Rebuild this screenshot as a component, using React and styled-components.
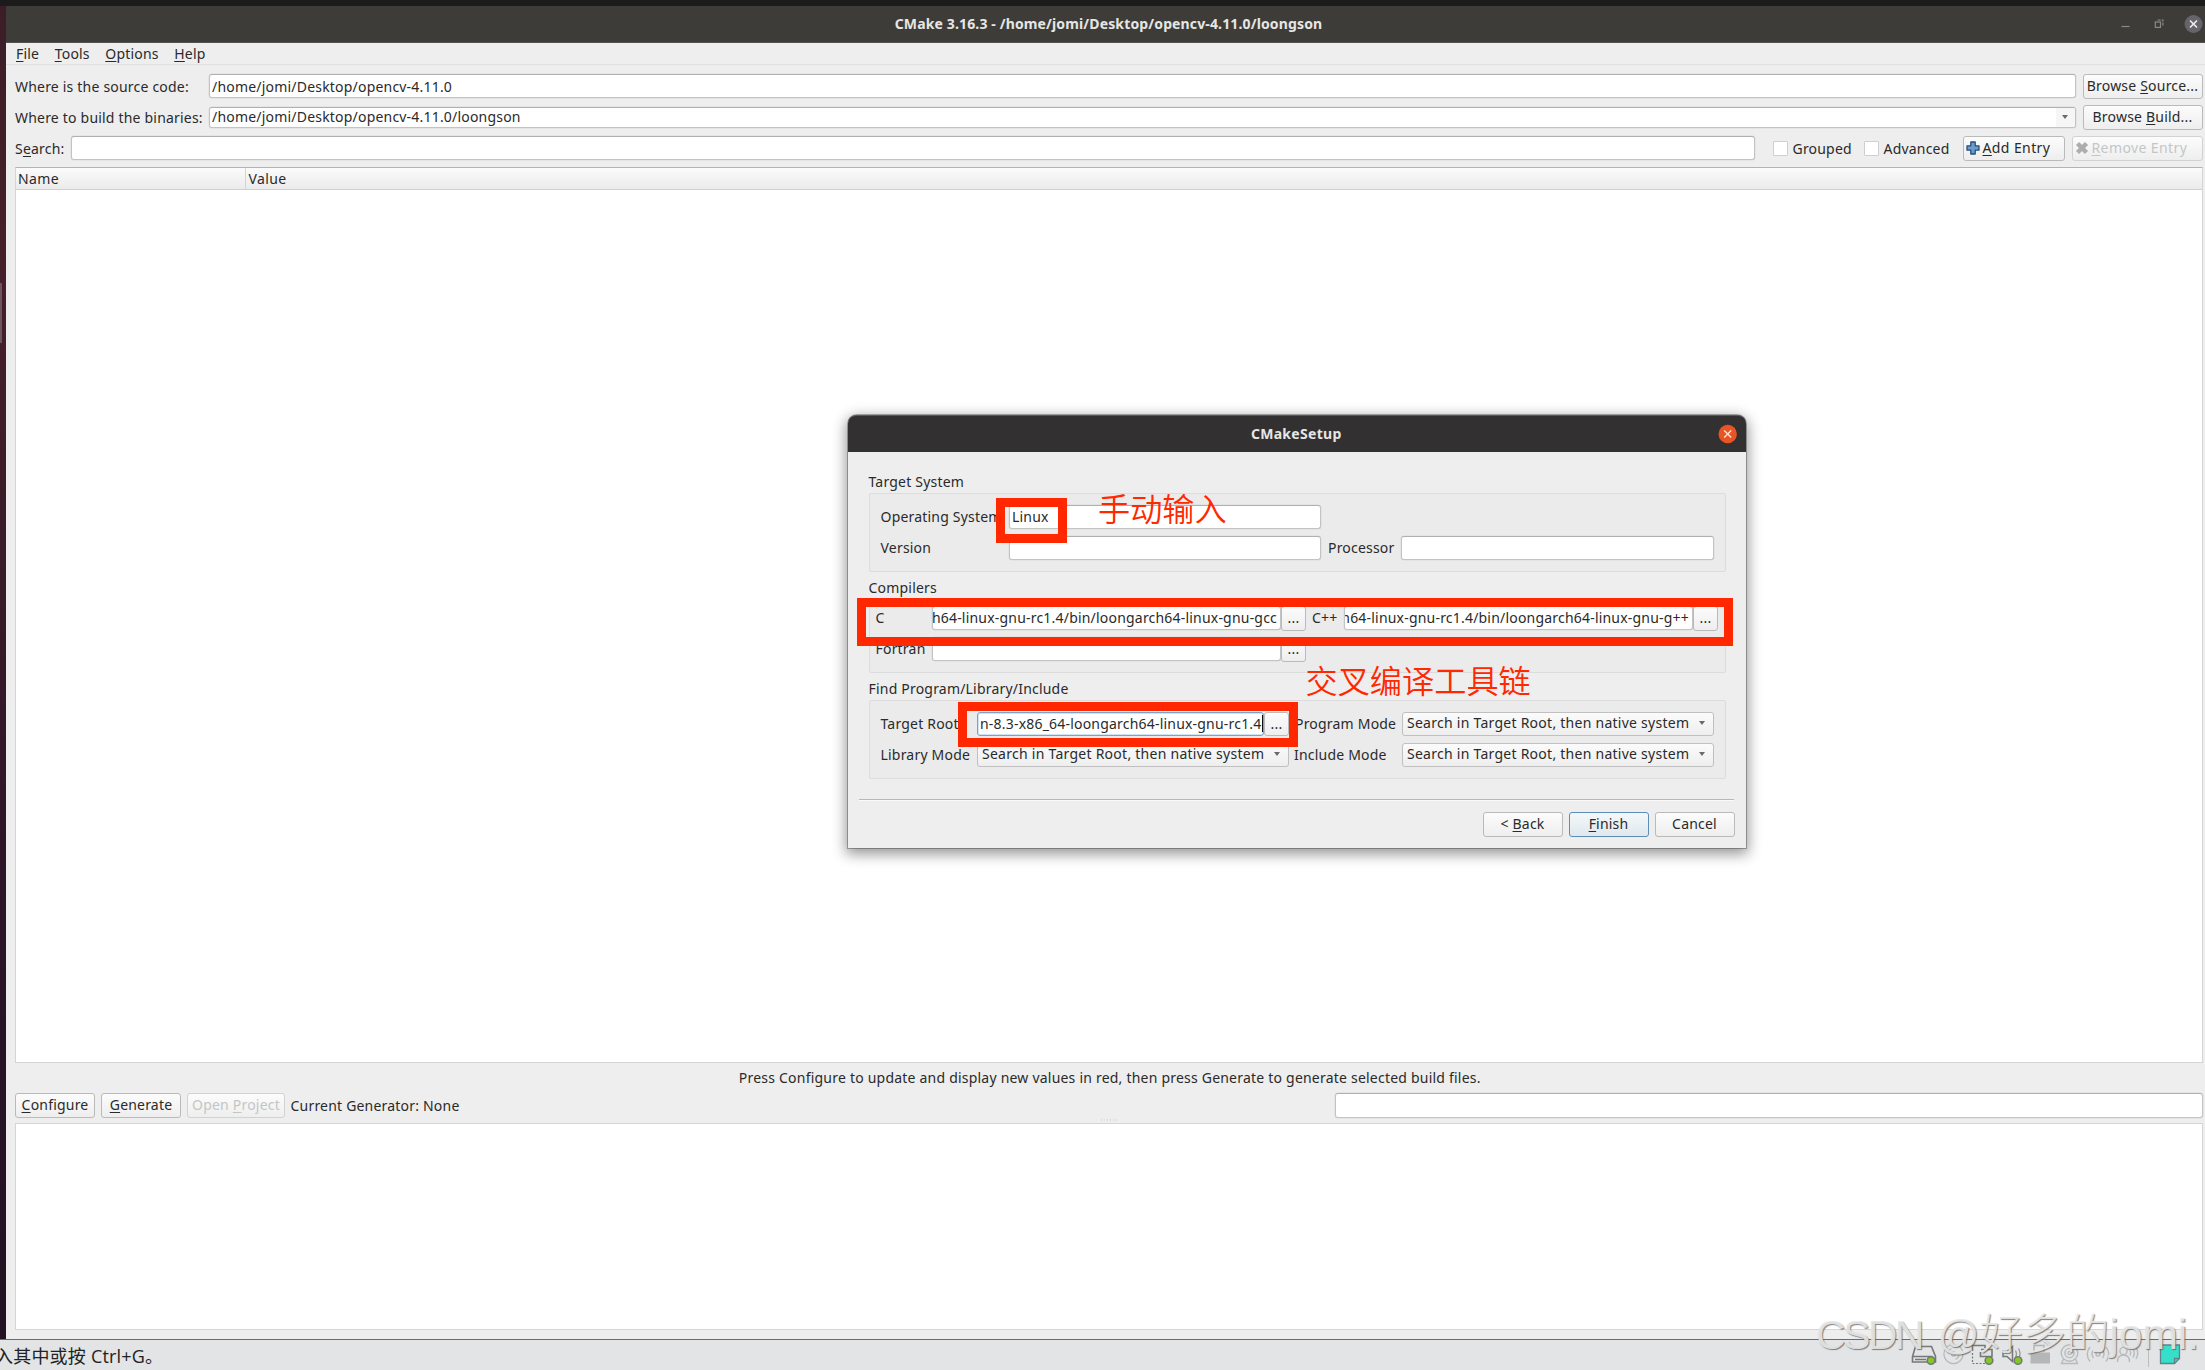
import React from 'react';
import styled, { createGlobalStyle, css } from 'styled-components';

const GlobalStyle = createGlobalStyle`
  * { box-sizing: border-box; }
  body {
    margin: 0;
    overflow: hidden;
    background: #eeeeee;
    color: #2a2a2a;
    font-family: "Noto Sans", "Noto Sans CJK SC", sans-serif;
    font-size: 14px;
    line-height: 20px;
    letter-spacing: 0.2px;
    white-space: nowrap;
  }
`;

const Screen = styled.div`
  position: relative;
  width: 2205px;
  height: 1370px;
  overflow: hidden;
  display: flex;
  flex-direction: column;
`;

const TopEdge = styled.div`
  height: 6px;
  background: #1b1b1b;
`;

const Desktop = styled.div`
  height: 1333px;
  display: flex;
`;

const Wallpaper = styled.div`
  width: 6px;
  padding-top: 277px;
  background: linear-gradient(#3c1d27 0, #45202a 20%, #381a28 45%, #2a1426 70%, #231221 100%);
`;

const DockMark = styled.div`
  width: 2px;
  height: 60px;
  background: #6b5560;
`;

const Window = styled.div`
  flex: 1;
  min-width: 0;
  display: flex;
  flex-direction: column;
  background: #eeeeee;
`;

const TitleBar = styled.header`
  height: 36.5px;
  display: grid;
  grid-template-columns: 1fr auto 1fr;
  align-items: center;
  padding: 1px 2px 0 0;
  background: #3e3c39;
  border-bottom: 1px solid #55524f;
`;

const WindowTitle = styled.h1`
  grid-column: 2;
  margin: 0 0 0 8px;
  color: #e6e6e4;
  font-size: 14px;
  font-weight: 700;
  line-height: 20px;
  letter-spacing: 0.14px;
`;

const WindowControls = styled.div`
  justify-self: end;
  display: flex;
`;

const MenuBar = styled.nav`
  height: 22.5px;
  display: flex;
  align-items: center;
  gap: 15.5px;
  padding: 1px 0 0 10px;
  border-bottom: 1px solid #e0e0e0;
`;

const MenuItem = styled.span`
  color: #2a2a2a;
`;

const Key = styled.span`
  text-decoration: underline;
  text-decoration-thickness: 1px;
  text-underline-offset: 2px;
`;

const Main = styled.main`
  display: flex;
  flex-direction: column;
  padding: 9px 2.5px 0 9px;
`;

const PathRow = styled.div`
  height: ${(p) => p.$height || 31}px;
  display: grid;
  grid-template-columns: 194px 1fr 120px;
  column-gap: 0;
  align-items: start;
`;

const FieldLabel = styled.label`
  line-height: 25px;
`;

const fieldFrame = css`
  border: 1px solid #c3c3c3;
  border-top-color: #b0b0b0;
  border-radius: 3px;
  background: #ffffff;
  box-shadow: 0 0 0 0.5px #dcdcdc;
`;

const Field = styled.div`
  ${fieldFrame}
  height: ${(p) => p.$height || 24}px;
  margin-right: ${(p) => p.$gap || 0}px;
  padding-left: 2px;
  display: flex;
  align-items: center;
  justify-content: ${(p) => (p.$end ? 'flex-end' : 'flex-start')};
  overflow: hidden;
  ${(p) => p.$end && css`padding-right: ${p.$focus ? 1 : 3}px;`}
  ${(p) => p.$focus && css`
    border-color: #7ba3c6;
    box-shadow: inset 0 0 0 1px #cfe3f2;
  `}
`;

const PathField = styled(Field)`
  padding-top: 1px;
`;

const EditableCombo = styled(Field)`
  height: 20.5px;
  margin-top: 2px;
  justify-content: space-between;
`;

const DropZone = styled.span`
  width: 19px;
  align-self: stretch;
  display: flex;
  align-items: center;
  justify-content: center;
  padding-right: 2px;
  background: #f6f6f6;
`;

const Caret = styled.i`
  border: 3.5px solid transparent;
  border-top: 4.5px solid #6a6a6a;
  border-bottom: 0;
`;

const Button = styled.button`
  width: ${(p) => (p.$width ? `${p.$width}px` : 'auto')};
  height: 24.5px;
  padding: 0;
  display: flex;
  align-items: center;
  justify-content: ${(p) => (p.$icon ? 'flex-start' : 'center')};
  gap: 3px;
  ${(p) => p.$icon && css`padding-left: 2px;`}
  border: 1px solid ${(p) => (p.disabled ? '#d2d2d2' : '#bababa')};
  border-radius: 3px;
  background: linear-gradient(#fcfcfc, #eeeeee);
  color: ${(p) => (p.disabled ? '#c3c6c6' : '#2a2a2a')};
  font: inherit;
  letter-spacing: inherit;
  white-space: pre;
  ${(p) => p.$primary && css`
    border-color: #5d8db5;
    background: linear-gradient(#f4f8fa, #dfe8ed);
  `}
`;

const AddButton = styled(Button)`
  letter-spacing: 0.4px;
`;

const SearchRow = styled.div`
  height: 31px;
  display: flex;
  align-items: flex-start;
`;

const SearchLabel = styled(FieldLabel)`
  width: 56px;
`;

const SearchField = styled(Field)`
  width: 1684px;
  margin-right: 18px;
`;

const Check = styled.label`
  width: ${(p) => p.$width}px;
  display: flex;
  align-items: center;
  gap: 5px;
  line-height: 25px;
`;

const CheckBox = styled.span`
  width: 14.5px;
  height: 14.5px;
  border: 1px solid #cfcfcf;
  border-radius: 1px;
  background: #ffffff;
`;

const Spacer = styled.span`
  flex: 1;
`;

const Table = styled.section`
  height: 896px;
  border: 1.5px solid #d5d5d5;
  border-top: 1px solid #b3b3b3;
  background: #ffffff;
`;

const TableHead = styled.div`
  height: 21.5px;
  display: grid;
  grid-template-columns: 229.5px 1fr;
  background: linear-gradient(#fbfbfb, #ebebeb);
  border-bottom: 1px solid #d0d0d0;
`;

const HeadCell = styled.div`
  padding-left: ${(p) => (p.$last ? 3 : 2)}px;
  line-height: 22px;
  letter-spacing: 0.4px;
  border-right: ${(p) => (p.$last ? 0 : '1px solid #d5d5d5')};
`;

const Hint = styled.p`
  height: 30px;
  margin: 0;
  padding-left: 2px;
  text-align: center;
  line-height: 29px;
  letter-spacing: 0.215px;
`;

const ActionRow = styled.div`
  height: 26px;
  display: flex;
  align-items: flex-start;
  gap: 6px;
`;

const GeneratorText = styled.span`
  line-height: 25px;
  margin-left: -0.5px;
`;

const Progress = styled(Field)`
  width: 868px;
  height: 25px;
`;

const Splitter = styled.div`
  height: 4px;
  display: flex;
  justify-content: center;
  gap: 2px;
`;

const Dot = styled.i`
  width: 1px;
  height: 2px;
  background: #dadada;
`;

const Output = styled.section`
  height: 207px;
  border: 1.5px solid #d5d5d5;
  background: #ffffff;
`;

const StatusBar = styled.footer`
  height: 31px;
  display: flex;
  align-items: center;
  border-top: 1px solid #6b6b6b;
  background: #e2e4e5;
`;

const StatusText = styled.span`
  margin-left: -5px;
  padding-top: 1px;
  color: #222222;
  font-family: "Open Sans", "Noto Sans CJK SC", sans-serif;
  font-size: 18px;
  letter-spacing: 0.2px;
`;

const StatusIcons = styled.div`
  margin-left: auto;
  display: flex;
`;

const Dialog = styled.section`
  position: absolute;
  left: 848px;
  top: 414.5px;
  width: 897.5px;
  height: 433.5px;
  display: flex;
  flex-direction: column;
  border-radius: 9px 9px 0 0;
  background: #eeeeee;
  box-shadow: 0 0 0 1px rgba(0, 0, 0, 0.28), 0 4px 14px 2px rgba(0, 0, 0, 0.42);
`;

const DialogBar = styled.header`
  height: 37px;
  display: grid;
  grid-template-columns: 1fr auto 1fr;
  align-items: center;
  padding-right: 8px;
  border-radius: 8px 8px 0 0;
  background: #333031;
  border-top: 1px solid #5a5757;
`;

const DialogTitle = styled.h2`
  grid-column: 2;
  margin: 1px 0 0 7px;
  color: #e6e6e4;
  font-size: 14px;
  line-height: 20px;
  font-weight: 700;
  letter-spacing: 0.3px;
`;

const DialogBody = styled.div`
  display: flex;
  flex-direction: column;
  padding: 20px 20px 0 20.5px;
`;

const Legend = styled.h3`
  height: ${(p) => p.$height}px;
  margin: 0;
  font-size: 14px;
  font-weight: 400;
  line-height: 20px;
`;

const Group = styled.div`
  height: ${(p) => p.$height}px;
  margin-bottom: ${(p) => p.$after}px;
  padding: ${(p) => p.$padding};
  display: flex;
  flex-direction: column;
  gap: 6.5px;
  border: 1px solid #dcdcdc;
  border-radius: 2px;
  background: #ebebeb;
`;

const FormRow = styled.div`
  height: 24.5px;
  display: grid;
  grid-template-columns: ${(p) => p.$columns};
  align-items: center;
`;

const Combo = styled.div`
  height: 24.5px;
  display: flex;
  align-items: center;
  justify-content: space-between;
  padding: 0 8px 1px 4px;
  border: 1px solid #c0c0c0;
  border-radius: 3px;
  background: linear-gradient(#fbfbfb, #eeeeee);
  letter-spacing: 0.26px;
`;

const TextCursor = styled.i`
  width: 1px;
  height: 17px;
  background: #111111;
`;

const Rule = styled.hr`
  width: 875px;
  margin: 0 0 11px -9.5px;
  border: 0;
  border-top: 1px solid #b8b8b8;
  border-bottom: 1px solid #fafafa;
`;

const WizardButtons = styled.div`
  display: flex;
  justify-content: flex-end;
  gap: 6px;
  margin-right: -9px;
`;

const Highlight = styled.div`
  position: absolute;
  left: ${(p) => p.$x}px;
  top: ${(p) => p.$y}px;
  width: ${(p) => p.$w}px;
  height: ${(p) => p.$h}px;
  border: 9px solid #ff2800;
`;

const Note = styled.div`
  position: absolute;
  left: ${(p) => p.$x}px;
  top: ${(p) => p.$y}px;
  color: #ff2800;
  font-family: "Noto Sans CJK SC", sans-serif;
  font-size: 32.2px;
  font-weight: 350;
  line-height: 40px;
  letter-spacing: 0;
`;

const Watermark = styled.div`
  position: absolute;
  left: 1816px;
  top: 1310px;
  display: flex;
  color: rgba(232, 232, 232, 0.92);
  font-family: "Liberation Sans", "Noto Sans CJK SC", sans-serif;
  font-size: 42px;
  font-weight: 300;
  line-height: 50px;
  letter-spacing: 0;
  white-space: pre;
  text-shadow: 1px 1px 1px rgba(90, 90, 90, 0.75);
`;

const Mark = styled.span`
  margin-left: ${(p) => p.$gap || 0}px;
  font-size: ${(p) => p.$size}px;
  letter-spacing: ${(p) => p.$track || 0}px;
`;

const Svg = styled.svg`
  display: block;
  flex: none;
`;

const MainControls = () => (
  <WindowControls>
    <Svg width="84" height="20" viewBox="0 0 84 20" fill="none">
      <path d="M2.5 12.5h8" stroke="#8b8986" strokeWidth="1.2" />
      <rect x="36.3" y="8" width="5.2" height="5.4" stroke="#8b8986" strokeWidth="1.2" />
      <path d="M38.5 6h5.4v5.4" stroke="#8b8986" strokeWidth="1.2" strokeDasharray="3 1" />
      <circle cx="74.5" cy="10" r="9" fill="#66636a" />
      <path d="M71 6.5l7 7M78 6.5l-7 7" stroke="#efefef" strokeWidth="1.6" />
    </Svg>
  </WindowControls>
);

const DialogClose = () => (
  <WindowControls>
    <Svg width="20" height="20" viewBox="0 0 20 20">
      <circle cx="9.7" cy="10" r="9.2" fill="#e95424" />
      <path d="M6.2 6.5l7 7M13.2 6.5l-7 7" stroke="#ffe2d6" strokeWidth="1.4" />
    </Svg>
  </WindowControls>
);

const PlusIcon = () => (
  <Svg width="14" height="14" viewBox="0 0 14 14">
    <path d="M4.8 1h4.4v3.8H13v4.4H9.2V13H4.8V9.2H1V4.8h3.8z" fill="#6c9cc9" stroke="#254f7d" strokeWidth="1.3" strokeLinejoin="round" />
  </Svg>
);

const CrossIcon = () => (
  <Svg width="14" height="14" viewBox="0 0 14 14">
    <path d="M2.5 2.5l9 9M11.5 2.5l-9 9" stroke="#adadad" strokeWidth="4.4" />
  </Svg>
);

const Green = ({ x }) => <circle cx={x} cy="17.5" r="3.8" fill="#83c926" />;

const TrayIcons = () => (
  <Svg width="295" height="24" viewBox="0 0 295 24" fill="none" stroke="#777777" strokeWidth="1.6">
    <path d="M5.5 3.5h16l4 10v5.5h-23v-5.5zM2.5 13.5h20M2.5 13.5V19M5 16.5h11" />
    <Green x="21" />
    <g stroke="#b9babb" strokeWidth="1.3">
      <circle cx="43.5" cy="11" r="9.6" />
      <circle cx="43.5" cy="11" r="2" />
      <path d="M38 10.5a6 6 0 0 1 3.5-5M49 11.5a6 6 0 0 1-3.5 5" />
    </g>
    <path d="M62.5 8V2.5H75V5" />
    <path d="M71 6.5h11v7H70.5V9" />
    <path d="M62.5 10v10.500H78" strokeDasharray="2 1.5" strokeWidth="1.2" />
    <Green x="79" />
    <path d="M93 8.5h4l5.5-5v15l-5.5-5h-4z" strokeWidth="1.5" />
    <path d="M105.5 7.5q2 3.5 0 7M108.5 5.5q3 5.5 0 10" stroke="#999999" strokeWidth="1.3" />
    <Green x="108" />
    <g stroke="#b2b3b4">
      <path d="M124 9V2.5h10V9" strokeWidth="1.4" />
      <rect x="120.5" y="9.5" width="19.5" height="11" fill="#b5b6b7" stroke="none" />
    </g>
    <g stroke="#b9babb" strokeWidth="1.4">
      <circle cx="159.5" cy="10" r="8.3" />
      <circle cx="159.5" cy="10" r="4.6" />
      <circle cx="159.5" cy="10" r="1.6" />
      <path d="M153.5 16l-2 4.5h16l-2-4.5" />
      <circle cx="188" cy="11" r="2" />
      <path d="M183.5 7q-3 4 0 8M192.5 7q3 4 0 8M180 4q-5.5 7 0 14.5M196 4q5.5 7 0 14.5" />
      <circle cx="213.5" cy="8" r="3.6" />
      <path d="M207.5 19q0-7 6-7t6 7M220 7.5q1.5 2.5 0 5M223 5.5q2.5 4.5 0 9M226 4q3.5 6 0 12" />
    </g>
    <path d="M238.5 0v24" stroke="#bcbcbc" strokeWidth="1" />
    <path d="M250.5 2h19v13.500l-5 5h-14z" fill="#36dfc9" stroke="#64808a" strokeWidth="1.3" />
    <path d="M269.5 15.5h-5v5" stroke="#64808a" strokeWidth="1.3" />
  </Svg>
);

const Accel = ({ before, k, children }) => (
  <span>
    {before}
    <Key>{k}</Key>
    {children}
  </span>
);

const SEARCH_MODE = 'Search in Target Root, then native system';

const ModeCombo = () => (
  <Combo>
    {SEARCH_MODE}
    <Caret />
  </Combo>
);

function SetupDialog() {
  return (
    <Dialog>
      <DialogBar>
        <DialogTitle>CMakeSetup</DialogTitle>
        <DialogClose />
      </DialogBar>
      <DialogBody>
        <Legend $height={21.5}>Target System</Legend>
        <Group $height={79} $after={6} $padding="10.5px 0 0 11px">
          <FormRow $columns="128.5px 312px">
            <span>Operating System</span>
            <Field>Linux</Field>
          </FormRow>
          <FormRow $columns="128.5px 312px 7px 73px 313px">
            <span>Version</span>
            <Field />
            <span />
            <span>Processor</span>
            <Field />
          </FormRow>
        </Group>
        <Legend $height={21}>Compilers</Legend>
        <Group $height={74} $after={6} $padding="6px 0 0 6px">
          <FormRow $columns="56.5px 349px 25px 6px 32px 349px 25px">
            <span>C</span>
            <Field $end>h64-linux-gnu-rc1.4/bin/loongarch64-linux-gnu-gcc</Field>
            <Button>...</Button>
            <span />
            <span>C++</span>
            <Field $end>h64-linux-gnu-rc1.4/bin/loongarch64-linux-gnu-g++</Field>
            <Button>...</Button>
          </FormRow>
          <FormRow $columns="56.5px 349px 25px">
            <span>Fortran</span>
            <Field />
            <Button>...</Button>
          </FormRow>
        </Group>
        <Legend $height={21}>Find Program/Library/Include</Legend>
        <Group $height={78.5} $after={20.5} $padding="10.5px 0 0 11px">
          <FormRow $columns="96.5px 287px 25px 6px 107px 312px">
            <span>Target Root</span>
            <Field $end $focus>
              n-8.3-x86_64-loongarch64-linux-gnu-rc1.4
              <TextCursor />
            </Field>
            <Button>...</Button>
            <span />
            <span>Program Mode</span>
            <ModeCombo />
          </FormRow>
          <FormRow $columns="96.5px 312px 5px 108px 312px">
            <span>Library Mode</span>
            <ModeCombo />
            <span />
            <span>Include Mode</span>
            <ModeCombo />
          </FormRow>
        </Group>
        <Rule />
        <WizardButtons>
          <Button $width={80}><Accel before="< " k="B">ack</Accel></Button>
          <Button $width={80} $primary><Accel k="F">inish</Accel></Button>
          <Button $width={80}>Cancel</Button>
        </WizardButtons>
      </DialogBody>
    </Dialog>
  );
}

export default function App() {
  return (
    <Screen>
      <GlobalStyle />
      <TopEdge />
      <Desktop>
        <Wallpaper>
          <DockMark />
        </Wallpaper>
        <Window>
          <TitleBar>
            <WindowTitle>CMake 3.16.3 - /home/jomi/Desktop/opencv-4.11.0/loongson</WindowTitle>
            <MainControls />
          </TitleBar>
          <MenuBar>
            <MenuItem><Accel k="F">ile</Accel></MenuItem>
            <MenuItem><Accel k="T">ools</Accel></MenuItem>
            <MenuItem><Accel k="O">ptions</Accel></MenuItem>
            <MenuItem><Accel k="H">elp</Accel></MenuItem>
          </MenuBar>
          <Main>
            <PathRow>
              <FieldLabel>Where is the source code:</FieldLabel>
              <PathField $gap={6.5}>/home/jomi/Desktop/opencv-4.11.0</PathField>
              <Button $width={120}><Accel before="Browse " k="S">ource...</Accel></Button>
            </PathRow>
            <PathRow>
              <FieldLabel>Where to build the binaries:</FieldLabel>
              <EditableCombo $gap={6.5}>
                /home/jomi/Desktop/opencv-4.11.0/loongson
                <DropZone><Caret /></DropZone>
              </EditableCombo>
              <Button $width={120}><Accel before="Browse " k="B">uild...</Accel></Button>
            </PathRow>
            <SearchRow>
              <SearchLabel><Accel before="S" k="e">arch:</Accel></SearchLabel>
              <SearchField />
              <Check $width={91}><CheckBox />Grouped</Check>
              <Check $width={98.5}><CheckBox />Advanced</Check>
              <AddButton $width={102.5} $icon><PlusIcon /><Accel k="A">dd Entry</Accel></AddButton>
              <Spacer />
              <AddButton $width={131} $icon disabled><CrossIcon /><Accel k="R">emove Entry</Accel></AddButton>
            </SearchRow>
            <Table>
              <TableHead>
                <HeadCell>Name</HeadCell>
                <HeadCell $last>Value</HeadCell>
              </TableHead>
            </Table>
            <Hint>Press Configure to update and display new values in red, then press Generate to generate selected build files.</Hint>
            <ActionRow>
              <Button $width={80}><Accel k="C">onfigure</Accel></Button>
              <Button $width={80}><Accel k="G">enerate</Accel></Button>
              <Button $width={98} disabled><Accel before="Open " k="P">roject</Accel></Button>
              <GeneratorText>Current Generator: None</GeneratorText>
              <Spacer />
              <Progress />
            </ActionRow>
            <Splitter>
              <Dot /><Dot /><Dot /><Dot /><Dot /><Dot />
            </Splitter>
            <Output />
          </Main>
        </Window>
      </Desktop>
      <StatusBar>
        <StatusText>入其中或按 Ctrl+G。</StatusText>
        <StatusIcons><TrayIcons /></StatusIcons>
      </StatusBar>
      <SetupDialog />
      <Highlight $x={996} $y={498} $w={71} $h={45} />
      <Highlight $x={857} $y={598} $w={875.5} $h={48} />
      <Highlight $x={958} $y={702} $w={340} $h={45} />
      <Note $x={1098} $y={487}>手动输入</Note>
      <Note $x={1305.5} $y={658.5}>交叉编译工具链</Note>
      <Watermark>
        <Mark $size={41} $track={-2.6}>CSDN</Mark>
        <Mark $size={41} $gap={16}>@</Mark>
        <Mark $size={43.3}>好多的</Mark>
        <Mark $size={42.5}>jomi.</Mark>
      </Watermark>
    </Screen>
  );
}
